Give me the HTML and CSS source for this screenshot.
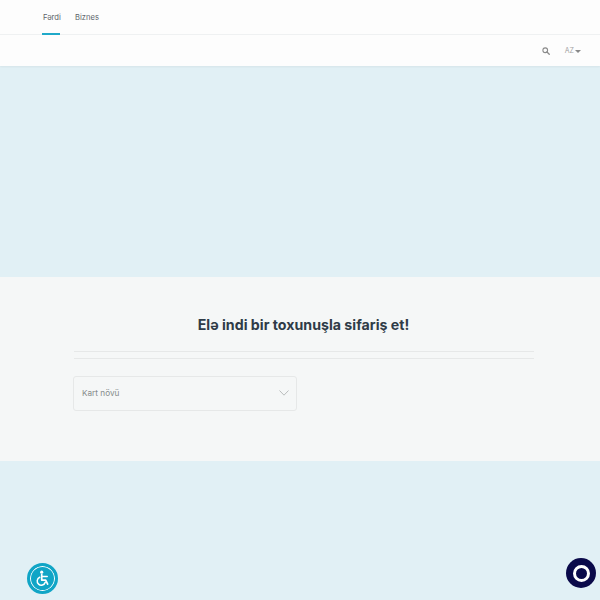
FILE: index.html
```html
<html>
<head>
  <link rel="stylesheet" href="styles.css">
</head>
<body>
  <header class="top-bar">
    <nav class="tabs">
      <a class="tab active">Fərdi</a>
      <a class="tab">Biznes</a>
    </nav>
  </header>
  <div class="sub-bar">
    <svg class="search-icon" viewBox="0 0 16 16" width="8" height="8">
      <circle cx="6.5" cy="6.5" r="4.7" fill="none" stroke="#8a8a8a" stroke-width="2.2"/>
      <path d="M10 10l4.5 4.5" stroke="#8a8a8a" stroke-width="2.6" stroke-linecap="round"/>
    </svg>
    <div class="lang">AZ<span class="caret"></span></div>
  </div>
  <div class="banner"></div>
  <section class="order">
    <h2 class="order-title">Elə indi bir toxunuşla sifariş et!</h2>
    <div class="rule"></div>
    <div class="rule second"></div>
    <div class="select-box">
      <span class="select-label">Kart növü</span>
      <svg class="chevron" viewBox="0 0 10 6" width="10" height="6">
        <path d="M.5.5L5 5.2 9.5.5" fill="none" stroke="#a9adad" stroke-width=".8"/>
      </svg>
    </div>
  </section>
  <div class="bottom-band"></div>

  <button class="access-btn">
    <svg viewBox="0 0 24 24" width="19" height="19">
      <circle cx="11" cy="4" r="2" fill="#fff"/>
      <path d="M11 7v7h5l2.5 5" fill="none" stroke="#fff" stroke-width="2.2" stroke-linecap="round" stroke-linejoin="round"/>
      <path d="M11 9.5h7" stroke="#fff" stroke-width="1.8" stroke-linecap="round"/>
      <path d="M8.5 10.5a5.2 5.2 0 1 0 7 6.3" fill="none" stroke="#fff" stroke-width="1.9" stroke-linecap="round"/>
    </svg>
  </button>
  <button class="chat-btn"><span class="chat-ring"></span></button>
</body>
</html>
```

FILE: styles.css
```css
html, body {
  margin: 0;
  padding: 0;
  overflow: hidden;
}

body {
  font-family: 'Inter', 'Noto Sans', sans-serif;
  background-color: #e1f0f5;
  height: 600px;
}

.top-bar {
  height: 34px;
  background-color: #fdfdfd;
  border-bottom: 1px solid #eff1f2;
  padding-left: 42px;
}

.tabs {
  display: flex;
  gap: 14px;
  height: 100%;
}

.tab {
  display: block;
  width: 18px;
  padding: 12px 0 0 1px;
  font-size: 7.6px;
  line-height: 11px;
  color: #5c6369;
  white-space: nowrap;
  box-sizing: border-box;
  height: 35px;
}

.tab.active {
  border-bottom: 2px solid #1fa9c9;
}

.sub-bar {
  height: 31px;
  background-color: #fdfdfd;
  display: flex;
  align-items: center;
  justify-content: flex-end;
  padding-right: 19px;
  gap: 14px;
  box-shadow: 0 1px 2px rgba(0,0,0,0.05);
}

.search-icon {
  margin-right: 1px;
}

.lang {
  display: flex;
  align-items: center;
  gap: 1px;
  font-size: 7px;
  line-height: 10px;
  padding-top: 1px;
  color: #a3a3a3;
}

.caret {
  width: 0;
  height: 0;
  border-left: 3px solid transparent;
  border-right: 3px solid transparent;
  border-top: 3px solid #888;
}

.banner {
  height: 211px;
}

.order {
  height: 184px;
  background-color: #f5f7f7;
  padding: 38px 0 0 73px;
  box-sizing: border-box;
}

.order-title {
  width: 460px;
  margin: 0;
  padding-left: 1px;
  box-sizing: border-box;
  text-align: center;
  font-size: 14.2px;
  line-height: 20px;
  font-weight: 700;
  color: #2f3b47;
}

.rule {
  width: 460px;
  height: 1px;
  margin: 16px 0 0 1px;
  background-color: #e6e8e8;
}

.rule.second {
  margin-top: 6px;
}

.select-box {
  width: 224px;
  height: 35px;
  margin-top: 17px;
  border: 1px solid #e6e8e8;
  border-radius: 3px;
  box-sizing: border-box;
  display: flex;
  align-items: center;
  justify-content: space-between;
  padding: 0 7px 0 8px;
}

.select-label {
  font-size: 8.2px;
  line-height: 10px;
  margin-top: -1px;
  color: #858b8b;
}

.chevron {
  margin-top: -1px;
}

.access-btn {
  position: fixed;
  left: 27px;
  top: 563px;
  width: 31px;
  height: 31px;
  border-radius: 50%;
  border: 3px solid #10a5c6;
  background-color: #10a5c6;
  box-shadow: inset 0 0 0 1px #fff;
  padding: 0;
  display: flex;
  align-items: center;
  justify-content: center;
  box-sizing: border-box;
}

.chat-btn {
  position: fixed;
  left: 566px;
  top: 558px;
  width: 30px;
  height: 30px;
  border: none;
  border-radius: 50%;
  background-color: #0a0a4a;
  padding: 0;
  display: flex;
  align-items: center;
  justify-content: center;
}

.chat-ring {
  display: block;
  width: 11px;
  height: 11px;
  border: 3px solid #fff;
  border-radius: 50%;
}
```
